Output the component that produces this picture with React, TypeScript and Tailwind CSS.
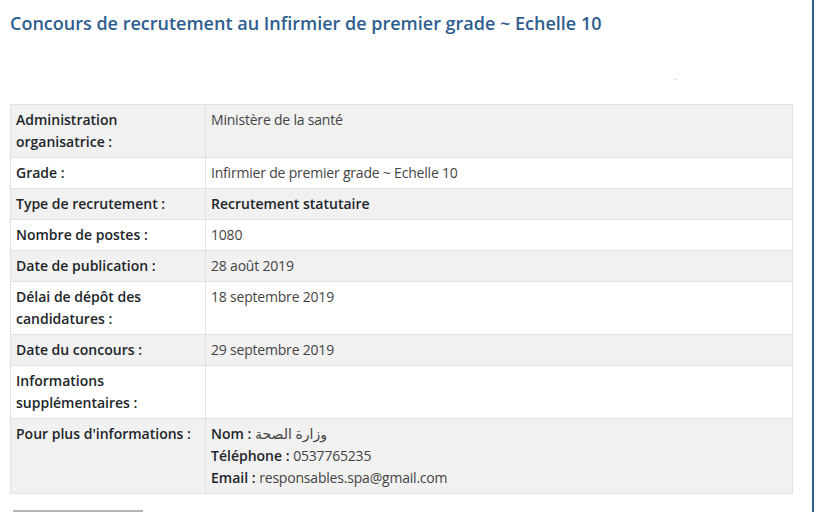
const rows: { label: string; value: React.ReactNode; bold?: boolean }[] = [
  { label: "Administration organisatrice :", value: "Ministère de la santé" },
  { label: "Grade :", value: "Infirmier de premier grade ~ Echelle 10" },
  { label: "Type de recrutement :", value: "Recrutement statutaire", bold: true },
  { label: "Nombre de postes :", value: "1080" },
  { label: "Date de publication :", value: "28 août 2019" },
  { label: "Délai de dépôt des candidatures :", value: "18 septembre 2019" },
  { label: "Date du concours :", value: "29 septembre 2019" },
  { label: "Informations supplémentaires :", value: "" },
  {
    label: "Pour plus d'informations :",
    value: (
      <>
        <div>
          <span className="font-semibold text-[#212529] tracking-normal">Nom : </span>
          <span className="font-['Noto_Sans','DejaVu_Sans',sans-serif]">وزارة الصحة</span>
        </div>
        <div>
          <span className="font-semibold text-[#212529] tracking-normal">Téléphone : </span>0537765235
        </div>
        <div>
          <span className="font-semibold text-[#212529] tracking-normal">Email : </span>responsables.spa@gmail.com
        </div>
      </>
    ),
  },
];

export default function App() {
  return (
    <div className="w-[814px] h-[512px] overflow-hidden border-r-2 border-[#2f5b8e] bg-white font-['Open_Sans',sans-serif]">
      <div className="px-[10px] pt-[10px]">
        <h1 className="text-[18px] leading-[26px] font-semibold text-[#2e5d8f]">
          Concours de recrutement au Infirmier de premier grade ~ Echelle 10
        </h1>

        <div className="relative h-[68px]">
          <div className="absolute left-[665px] top-[43px] w-px h-px bg-[#bbb]" />
        </div>

        <table className="w-[783px] border-collapse text-[14px] leading-[22px]">
          <tbody>
            {rows.map((row, i) => (
              <tr key={i} className={i % 2 === 0 ? "bg-[#f1f1f1]" : "bg-white"}>
                <td className="w-[195px] border border-[#dee2e6] px-[5px] pt-[4px] pb-[4px] align-top font-semibold text-[#212529]">
                  {row.label}
                </td>
                <td
                  className={
                    "border border-[#dee2e6] px-[5px] pt-[4px] pb-[4px] align-top " +
                    (row.bold ? "font-semibold text-[#212529]" : "text-[#444] tracking-[-0.2px]")
                  }
                >
                  {row.value}
                </td>
              </tr>
            ))}
          </tbody>
        </table>

        <div className="mt-[16px] ml-[3px] w-[130px] h-[20px] border-t-2 border-[#b5b5b5]" />
      </div>
    </div>
  );
}
